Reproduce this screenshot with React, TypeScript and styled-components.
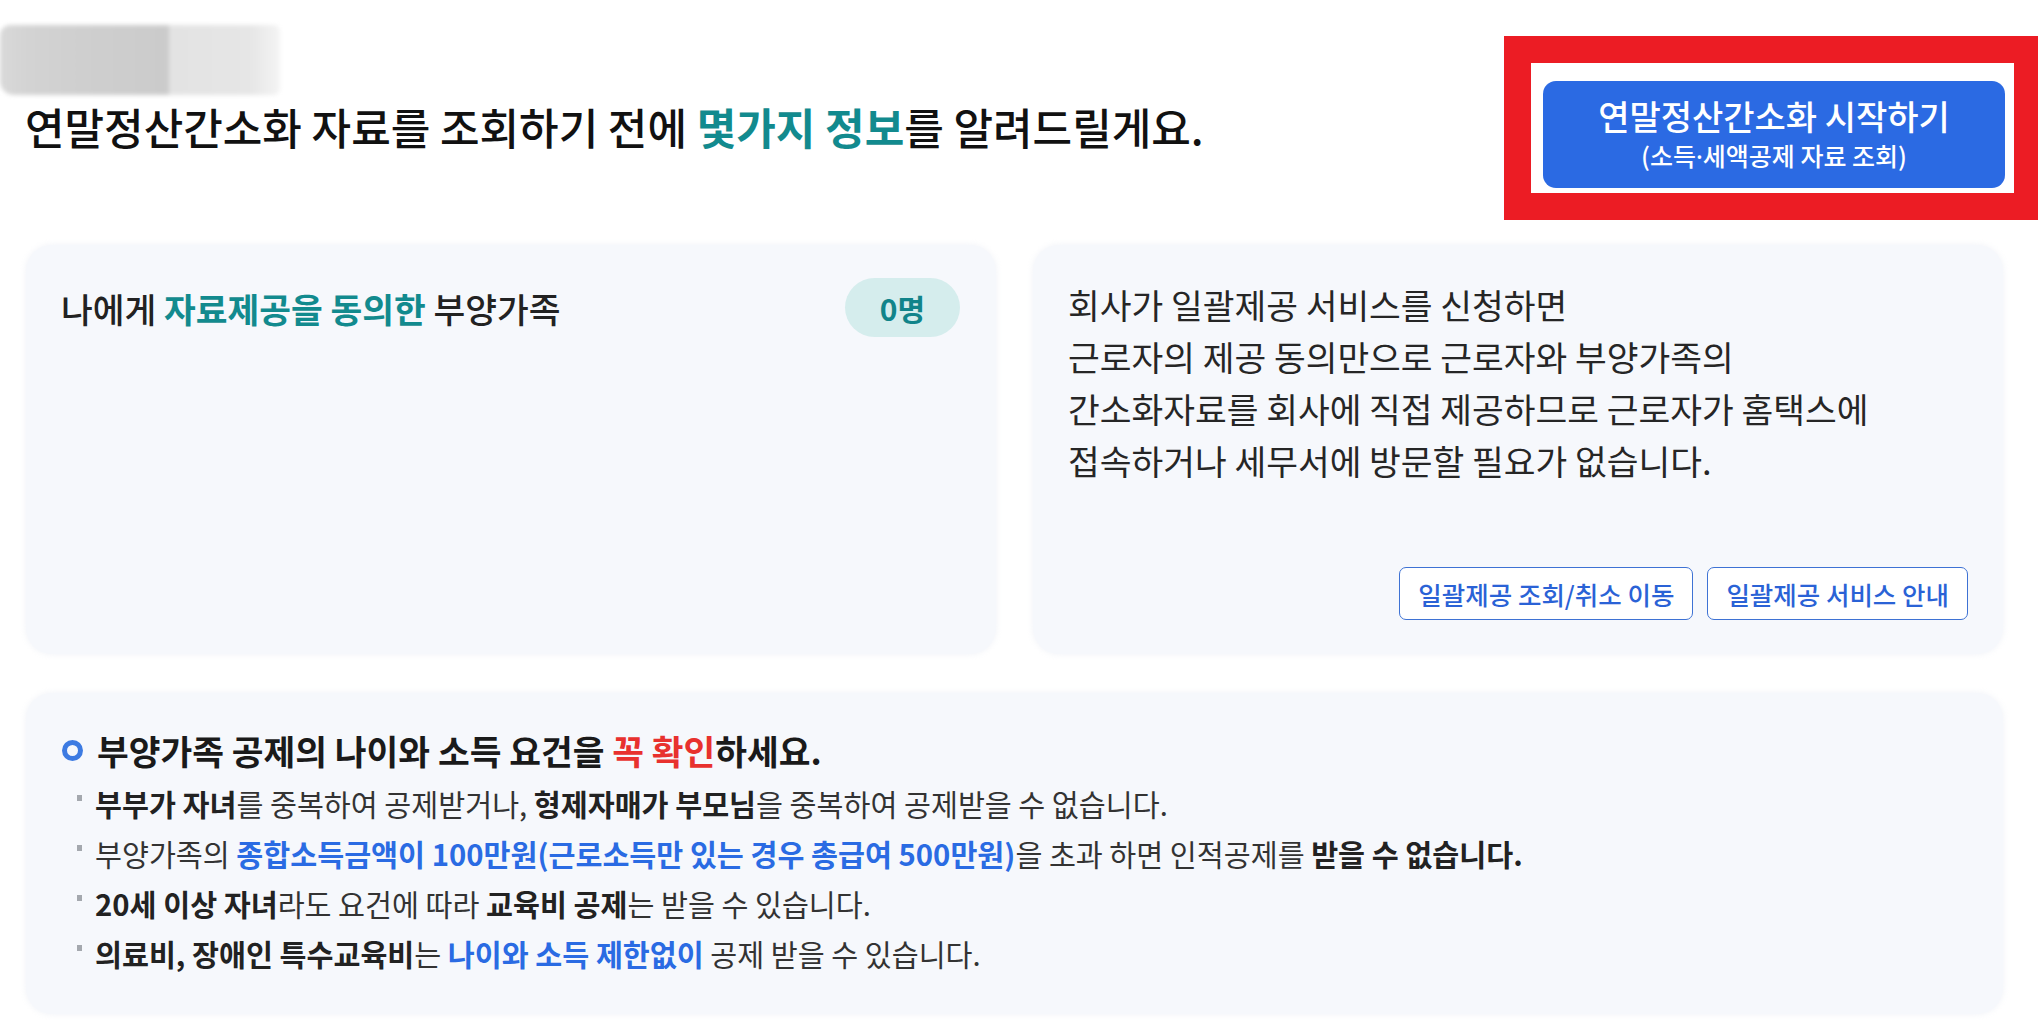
import styled, { createGlobalStyle } from "styled-components";

const GlobalStyle = createGlobalStyle`
  html, body {
    margin: 0;
    padding: 0;
    background: #ffffff;
    overflow-x: hidden;
  }
  body {
    font-family: "Noto Sans CJK KR", "Noto Sans", sans-serif;
    color: #222;
  }
  * {
    box-sizing: border-box;
  }
`;

const Page = styled.div`
  width: 2038px;
  padding: 25px 35px 18px 26px;
`;

const Top = styled.div`
  display: flex;
  justify-content: space-between;
  align-items: flex-start;
`;

const TitleBlock = styled.div`
  display: flex;
  flex-direction: column;
`;

// blurred-out logo in the original capture
const BlurredLogo = styled.div`
  width: 280px;
  height: 70px;
  margin-left: -26px;
  border-radius: 10px 6px 6px 14px;
  background: linear-gradient(
    to right,
    #d9d9d9 0px,
    #d3d3d3 28px,
    #cfcfcf 83px,
    #cbcbcb 168px,
    #e3e3e3 170px,
    #e6e6e6 250px,
    #f4f4f4 280px
  );
  filter: blur(2px);
`;

const Title = styled.h1`
  margin: 6px 0 0 -1px;
  font-size: 43px;
  line-height: 50px;
  font-weight: 500;
  color: #111;
`;

const Accent = styled.span<{ $tone: "teal" | "blue" | "red" }>`
  color: ${(p) =>
    p.$tone === "teal" ? "#128a8e" : p.$tone === "blue" ? "#2a6be3" : "#e8312e"};
  font-weight: 700;
`;

const Strong = styled.b`
  font-weight: 700;
  color: #222;
`;

const StartWrap = styled.div`
  position: relative;
  margin-top: 56px;
  margin-right: -2px;
`;

const StartButton = styled.button`
  display: flex;
  flex-direction: column;
  align-items: center;
  justify-content: center;
  width: 462px;
  height: 107px;
  border: none;
  border-radius: 13px;
  background: #2b6ae3;
  color: #fff;
  font-family: inherit;
  cursor: pointer;
`;

const StartMain = styled.span`
  font-size: 34px;
  line-height: 42px;
  font-weight: 500;
`;

const StartSub = styled.span`
  font-size: 25px;
  line-height: 36px;
  font-weight: 500;
`;

const NarrowDot = styled.span`
  font-family: "Noto Sans", sans-serif;
`;

// red annotation frame drawn over the capture
const Highlight = styled.div`
  position: absolute;
  top: -45px;
  left: -39px;
  right: -36px;
  bottom: -32px;
  border: 27px solid #ec1c24;
  pointer-events: none;
`;

const CardRow = styled.div`
  display: grid;
  grid-template-columns: 970px 970px;
  gap: 37px;
  margin-top: 57px;
`;

const Card = styled.section<{ $height: number }>`
  display: flex;
  flex-direction: column;
  height: ${(p) => p.$height}px;
  background: #f6f8fc;
  border-radius: 26px;
  box-shadow: 0 0 6px rgba(230, 234, 242, 0.6);
`;

const ConsentCard = styled(Card)`
  padding: 33px 36px 0 35px;
`;

const ConsentHead = styled.div`
  display: flex;
  align-items: center;
  justify-content: space-between;
`;

const CardHeading = styled.h2`
  margin: 0;
  font-size: 34.5px;
  line-height: 44px;
  font-weight: 500;
  color: #222;
`;

const CountBadge = styled.span`
  display: inline-flex;
  align-items: center;
  justify-content: center;
  width: 115px;
  height: 59px;
  border-radius: 30px;
  background: #d5eded;
  color: #11848a;
  font-size: 30px;
  font-weight: 700;
`;

const InfoCard = styled(Card)`
  padding: 33px 35px 34px 35px;
`;

const InfoText = styled.p`
  margin: 0;
  font-size: 34.5px;
  line-height: 52px;
  font-weight: 400;
  color: #262626;
`;

const LinkRow = styled.div`
  display: flex;
  justify-content: flex-end;
  gap: 14px;
  margin-top: auto;
`;

const LinkButton = styled.button`
  height: 53px;
  padding: 0 18px;
  border: 1.5px solid #3e72d4;
  border-radius: 7px;
  background: #fff;
  color: #2a62d6;
  font-family: inherit;
  font-size: 25.5px;
  font-weight: 500;
  cursor: pointer;
`;

const NoticeCard = styled(Card)`
  margin-top: 39px;
  padding: 35px 36px 36px 36px;
`;

const NoticeHead = styled.h3`
  display: flex;
  align-items: center;
  gap: 14px;
  margin: 0;
  font-size: 34.5px;
  line-height: 44px;
  font-weight: 700;
  color: #1a1a1a;
`;

const Ring = styled.span`
  flex: none;
  width: 21px;
  height: 21px;
  border: 5px solid #3d7be2;
  border-radius: 50%;
`;

const NoticeList = styled.ul`
  list-style: none;
  margin: 6px 0 0 0;
  padding: 0 0 0 15px;
`;

const NoticeItem = styled.li`
  position: relative;
  padding-left: 18px;
  font-size: 29.3px;
  line-height: 50px;
  font-weight: 400;
  color: #333;

  &::before {
    content: "";
    position: absolute;
    left: 0;
    top: 17px;
    width: 5px;
    height: 6px;
    background: #a4a8ae;
  }
`;

export default function App() {
  return (
    <>
      <GlobalStyle />
      <Page>
        <Top>
          <TitleBlock>
            <BlurredLogo />
            <Title>
              연말정산간소화 자료를 조회하기 전에 <Accent $tone="teal">몇가지 정보</Accent>를
              알려드릴게요.
            </Title>
          </TitleBlock>
          <StartWrap>
            <StartButton type="button">
              <StartMain>연말정산간소화 시작하기</StartMain>
              <StartSub>
                (소득<NarrowDot>·</NarrowDot>세액공제 자료 조회)
              </StartSub>
            </StartButton>
            <Highlight />
          </StartWrap>
        </Top>

        <CardRow>
          <ConsentCard $height={409}>
            <ConsentHead>
              <CardHeading>
                나에게 <Accent $tone="teal">자료제공을 동의한</Accent> 부양가족
              </CardHeading>
              <CountBadge>0명</CountBadge>
            </ConsentHead>
          </ConsentCard>

          <InfoCard $height={409}>
            <InfoText>
              회사가 일괄제공 서비스를 신청하면
              <br />
              근로자의 제공 동의만으로 근로자와 부양가족의
              <br />
              간소화자료를 회사에 직접 제공하므로 근로자가 홈택스에
              <br />
              접속하거나 세무서에 방문할 필요가 없습니다.
            </InfoText>
            <LinkRow>
              <LinkButton type="button">일괄제공 조회/취소 이동</LinkButton>
              <LinkButton type="button">일괄제공 서비스 안내</LinkButton>
            </LinkRow>
          </InfoCard>
        </CardRow>

        <NoticeCard $height={321}>
          <NoticeHead>
            <Ring />
            <span>
              부양가족 공제의 나이와 소득 요건을 <Accent $tone="red">꼭 확인</Accent>하세요.
            </span>
          </NoticeHead>
          <NoticeList>
            <NoticeItem>
              <Strong>부부가 자녀</Strong>를 중복하여 공제받거나, <Strong>형제자매가 부모님</Strong>을
              중복하여 공제받을 수 없습니다.
            </NoticeItem>
            <NoticeItem>
              부양가족의{" "}
              <Accent $tone="blue">
                종합소득금액이 100만원(근로소득만 있는 경우 총급여 500만원)
              </Accent>
              을 초과 하면 인적공제를 <Strong>받을 수 없습니다.</Strong>
            </NoticeItem>
            <NoticeItem>
              <Strong>20세 이상 자녀</Strong>라도 요건에 따라 <Strong>교육비 공제</Strong>는 받을
              수 있습니다.
            </NoticeItem>
            <NoticeItem>
              <Strong>의료비, 장애인 특수교육비</Strong>는{" "}
              <Accent $tone="blue">나이와 소득 제한없이</Accent> 공제 받을 수 있습니다.
            </NoticeItem>
          </NoticeList>
        </NoticeCard>
      </Page>
    </>
  );
}
